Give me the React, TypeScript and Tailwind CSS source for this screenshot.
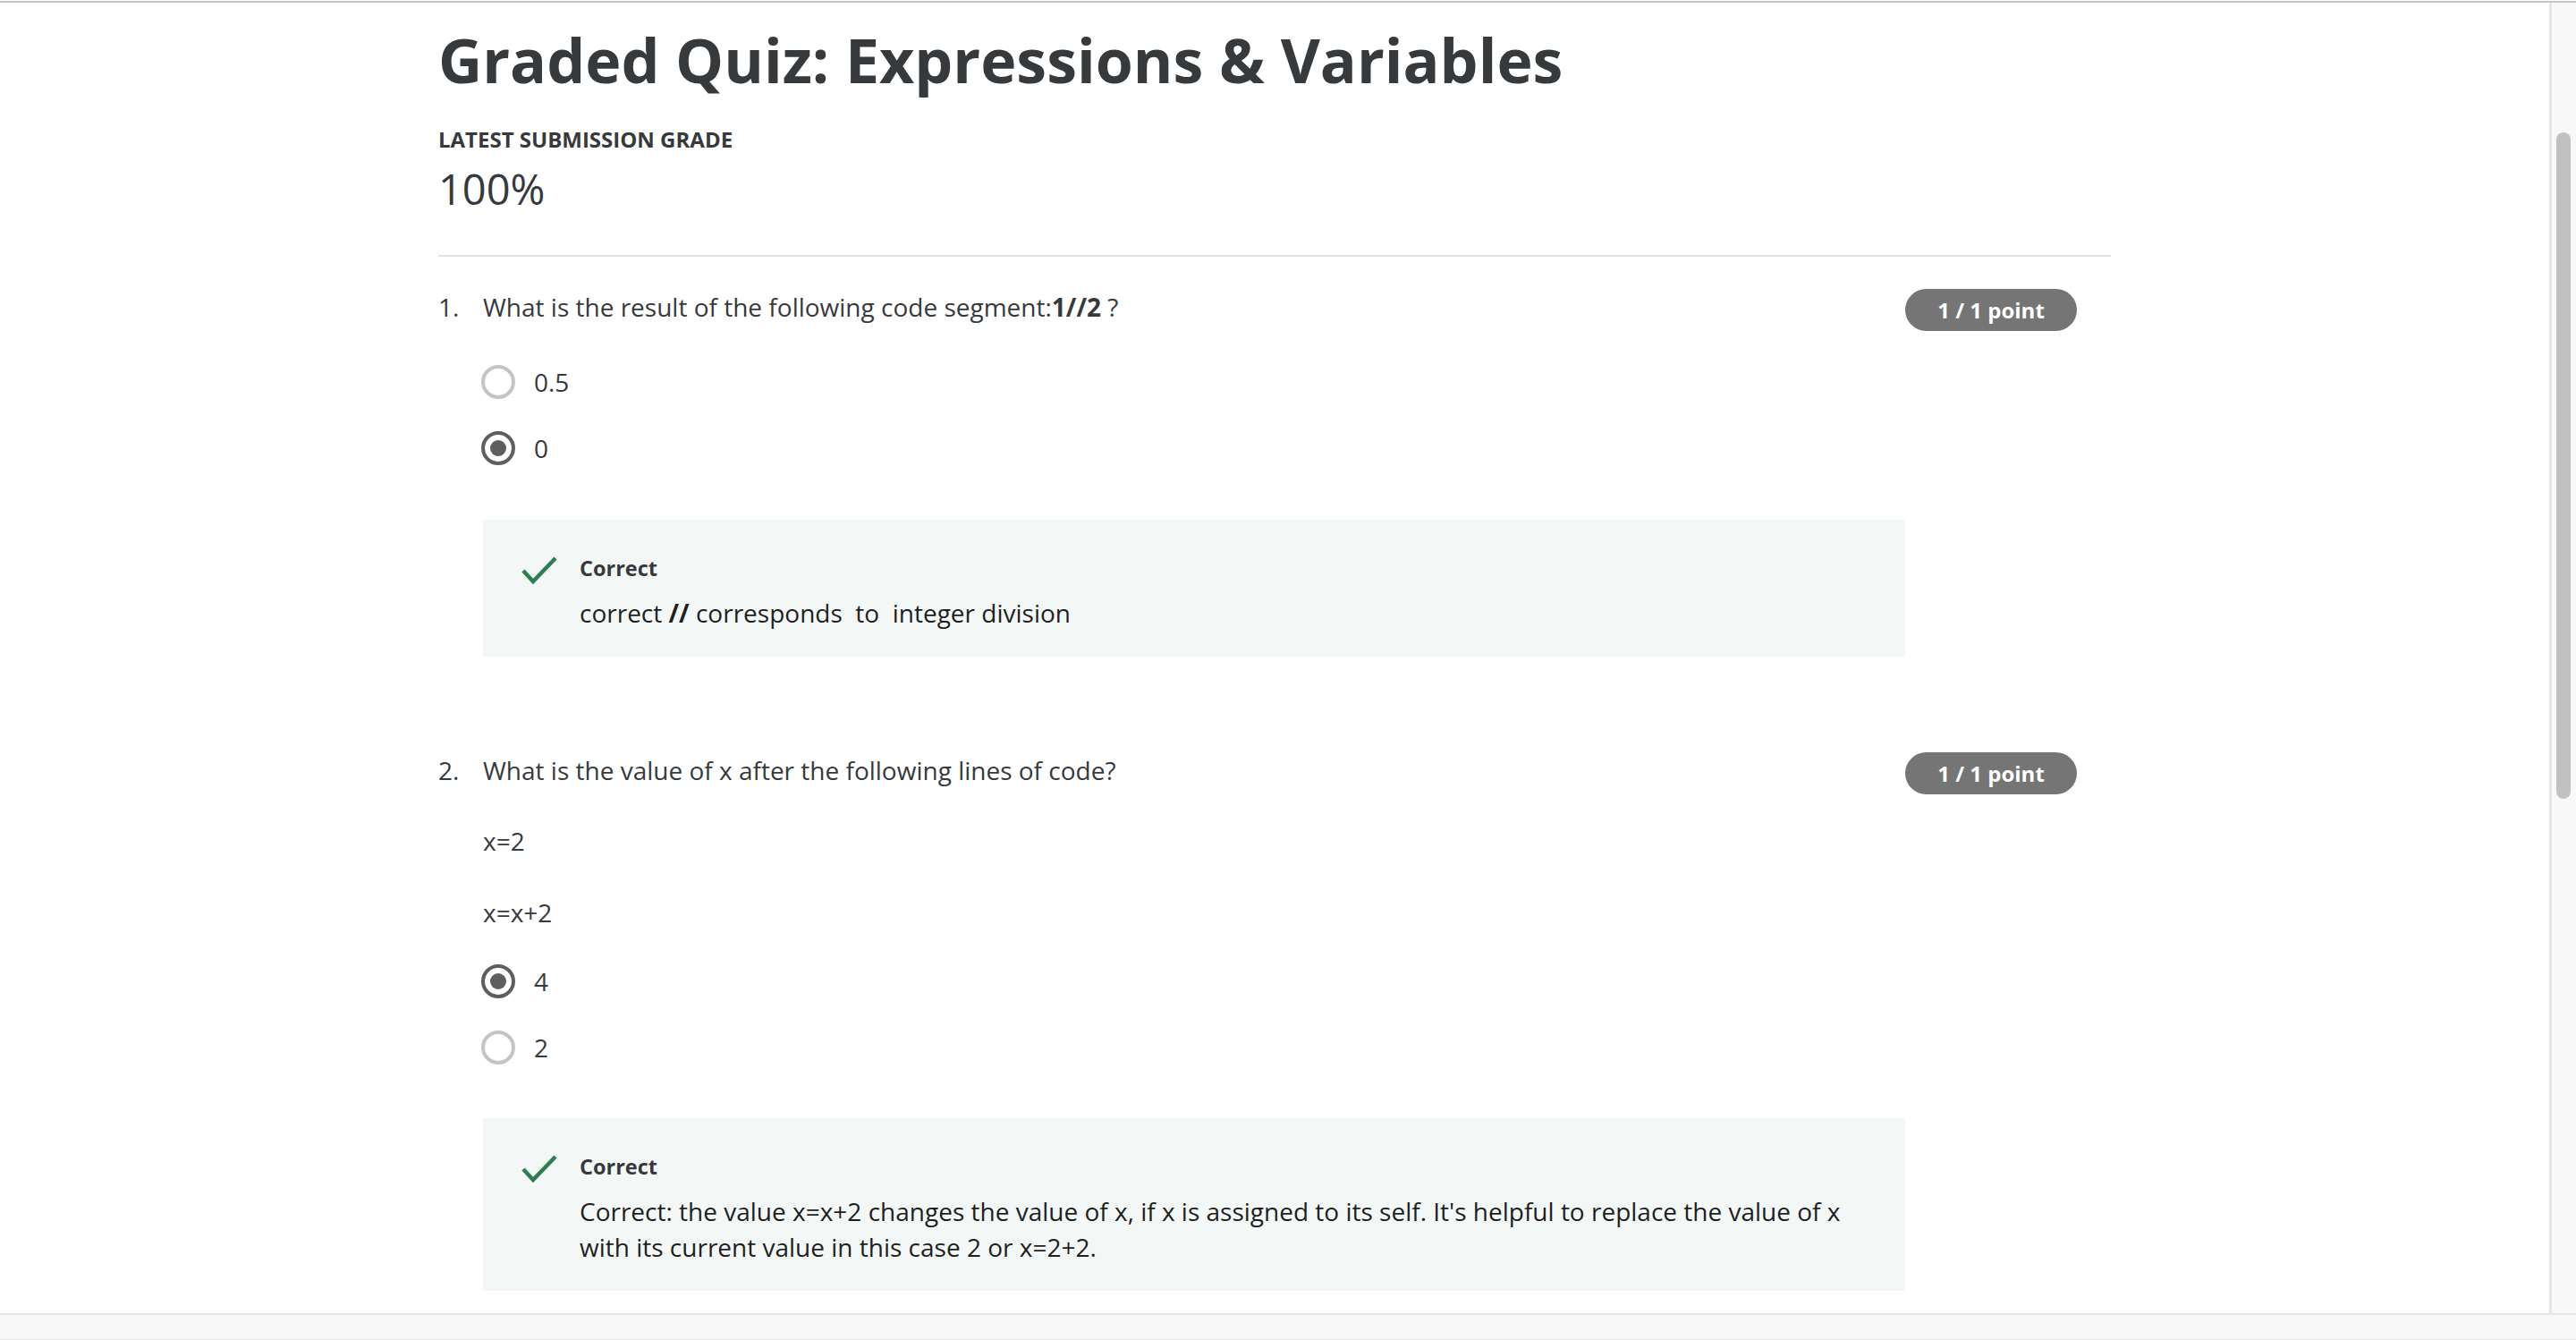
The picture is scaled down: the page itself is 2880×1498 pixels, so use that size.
import type { ReactNode } from 'react'

function Radio({ checked }: { checked?: boolean }) {
  if (checked) {
    return (
      <span className="flex size-[38px] shrink-0 items-center justify-center rounded-full border-[4px] border-[#5e5e5e]">
        <span className="size-[18px] rounded-full bg-[#5e5e5e]" />
      </span>
    )
  }
  return <span className="size-[38px] shrink-0 rounded-full border-[4px] border-[#c4c4c4]" />
}

function Option({ label, checked }: { label: string; checked?: boolean }) {
  return (
    <div className="-ml-[2px] flex h-[38px] items-center gap-[21px]">
      <Radio checked={checked} />
      <span className="text-[28px] leading-[38px] text-[#373a3c]">{label}</span>
    </div>
  )
}

function Feedback({ children }: { children: ReactNode }) {
  return (
    <div className="flex gap-[25px] bg-[#f3f8f7] pt-[38px] pr-[43px] pb-[29px] pl-[43px]">
      <svg viewBox="0 0 40 32" className="mt-[2px] h-[32px] w-[40px] shrink-0" fill="none">
        <path d="M2 17 L13 29 L38 3" stroke="#2e7d55" strokeWidth="4.5" />
      </svg>
      <div className="flex flex-col gap-[14px]">
        <strong className="text-[23.5px] leading-[32px] font-bold text-[#373a3c]">Correct</strong>
        <p className="text-[28px] leading-[40px] text-[#1f1f1f]">{children}</p>
      </div>
    </div>
  )
}

function Question({ num, children }: { num: string; children: ReactNode }) {
  return (
    <div className="flex items-start">
      <span className="w-[50px] shrink-0 text-[28px] leading-[38px] text-[#373a3c]">{num}</span>
      <div className="flex min-w-0 flex-1 flex-col">{children}</div>
      <div className="w-[230px] shrink-0">
        <span className="-mt-[1px] flex h-[47px] w-[192px] items-center justify-center rounded-full bg-[#757575] text-[24px] font-bold text-white">
          1 / 1 point
        </span>
      </div>
    </div>
  )
}

export default function App() {
  return (
    <div className="flex h-[1498px] w-full flex-col overflow-hidden bg-[#f8f8f8] font-['Open_Sans',sans-serif]">
      <div className="h-[1px] bg-white" />
      <div className="h-[2px] bg-[#c6c6c6]" />
      <div className="flex min-h-0 flex-1">
        <main className="min-w-0 flex-1 overflow-hidden border-r-[3px] border-[#e6e6e6] bg-white">
          <div className="ml-[490px] w-[1870px] pt-[24px]">
            <h1 className="text-[68px] leading-[80px] font-bold text-[#373a3c]">
              Graded Quiz: Expressions &amp; Variables
            </h1>
            <div className="mt-[33px] text-[24px] leading-[32px] font-bold text-[#373a3c]">
              LATEST SUBMISSION GRADE
            </div>
            <div className="mt-[11px] text-[47px] leading-[56px] text-[#373a3c]">100%</div>
            <div className="mt-[46px] h-[2px] bg-[#e1e1e1]" />

            <div className="mt-[37px]">
              <Question num="1.">
                <p className="text-[28px] leading-[38px] text-[#373a3c]">
                  What is the result of the following code segment:<strong className="font-bold">1//2</strong> ?
                </p>
                <div className="mt-[46px] flex flex-col gap-[36px]">
                  <Option label="0.5" />
                  <Option label="0" checked />
                </div>
                <div className="mt-[61px]">
                  <Feedback>
                    correct <strong className="font-bold">//</strong> corresponds&nbsp; to&nbsp; integer division
                  </Feedback>
                </div>
              </Question>
            </div>

            <div className="mt-[108px]">
              <Question num="2.">
                <p className="text-[28px] leading-[38px] text-[#373a3c]">
                  What is the value of x after the following lines of code?
                </p>
                <p className="mt-[41px] text-[28px] leading-[38px] text-[#373a3c]">x=2</p>
                <p className="mt-[42px] text-[28px] leading-[38px] text-[#373a3c]">x=x+2</p>
                <div className="mt-[39px] flex flex-col gap-[36px]">
                  <Option label="4" checked />
                  <Option label="2" />
                </div>
                <div className="mt-[60px]">
                  <Feedback>
                    Correct: the value x=x+2 changes the value of x, if x is assigned to its self. It's helpful to
                    replace the value of x with its current value in this case 2 or x=2+2.
                  </Feedback>
                </div>
              </Question>
            </div>
          </div>
        </main>
        <div className="w-[27px] shrink-0 bg-[#f8f8f8] pt-[145px] pl-[5px]">
          <div className="h-[745px] w-[16px] rounded-full bg-[#c1c1c1]" />
        </div>
      </div>
      <div className="h-[30px] shrink-0 border-t-2 border-b border-[#e4e4e4] bg-[#f8f8f8]" />
    </div>
  )
}
